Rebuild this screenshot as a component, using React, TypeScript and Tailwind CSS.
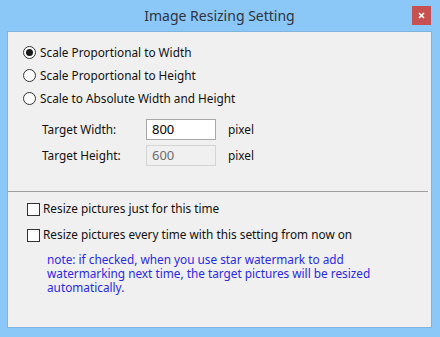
import React from "react";

const font = { fontFamily: '"Noto Sans", "Open Sans", sans-serif' };

const Radio: React.FC<{ checked?: boolean; label: string }> = ({ checked, label }) => (
  <div className="flex items-center h-[23px]">
    <span className="w-[13px] h-[13px] rounded-full border border-[#333] bg-white flex items-center justify-center">
      {checked && <span className="w-[7px] h-[7px] rounded-full bg-[#1a1a1a]" />}
    </span>
    <span className="ml-[4px]">{label}</span>
  </div>
);

const Check: React.FC<{ label: string }> = ({ label }) => (
  <div className="flex items-center h-[26px]">
    <span className="w-[13px] h-[13px] border border-[#333] bg-white" />
    <span className="ml-[3px]">{label}</span>
  </div>
);

export default function App() {
  return (
    <div
      className="w-[440px] h-[337px] bg-[#8bc7f7] flex flex-col pl-[7px] pr-[8px] pb-[9px] text-[11.8px] text-[#111]"
      style={font}
    >
      {/* Title bar */}
      <div className="h-[31px] relative flex items-center justify-center">
        <span className="text-[14px] text-[#2b3440] -mt-[1px]">Image Resizing Setting</span>
        <button className="absolute right-[1px] top-[6px] w-[19px] h-[19px] bg-[#c75050] flex items-center justify-center">
          <svg width="7" height="7" viewBox="0 0 7 7">
            <path d="M1 1 L6 6 M6 1 L1 6" stroke="#fff" strokeWidth="1.6" />
          </svg>
        </button>
      </div>

      {/* Client area */}
      <div className="flex-1 bg-[#f0f0f0] border border-[#7fb3e0] flex flex-col">
        <div className="pl-[15px] pt-[9px]">
          <Radio checked label="Scale Proportional to Width" />
          <Radio label="Scale Proportional to Height" />
          <Radio label="Scale to Absolute Width and Height" />
        </div>

        <div className="pl-[34px] pt-[9px] flex flex-col gap-[5px]">
          <div className="flex items-center h-[21px]">
            <span className="w-[104px]">Target Width:</span>
            <div className="w-[70px] h-[21px] border border-[#a8a8a8] bg-white flex items-center pl-[5px] text-[13px] text-black">
              800
            </div>
            <span className="ml-[12px]">pixel</span>
          </div>
          <div className="flex items-center h-[21px]">
            <span className="w-[104px]">Target Height:</span>
            <div className="w-[70px] h-[21px] border border-[#d5d5d5] bg-[#f0f0f0] flex items-center pl-[5px] text-[13px] text-[#6d6d6d]">
              600
            </div>
            <span className="ml-[12px]">pixel</span>
          </div>
        </div>

        <div className="mt-[25px] mr-[3px] h-px bg-[#a0a0a0]" />

        <div className="pl-[19px] pt-[4px]">
          <Check label="Resize pictures just for this time" />
          <Check label="Resize pictures every time with this setting from now on" />
          <div className="pl-[20px] pt-[4px] text-[#2a2ae6] flex flex-col">
            <span className="h-[14px] leading-[14px]">note: if checked, when you use star watermark to add</span>
            <span className="h-[14px] leading-[14px]">watermarking next time, the target pictures will be resized</span>
            <span className="h-[14px] leading-[14px]">automatically.</span>
          </div>
        </div>
      </div>
    </div>
  );
}
